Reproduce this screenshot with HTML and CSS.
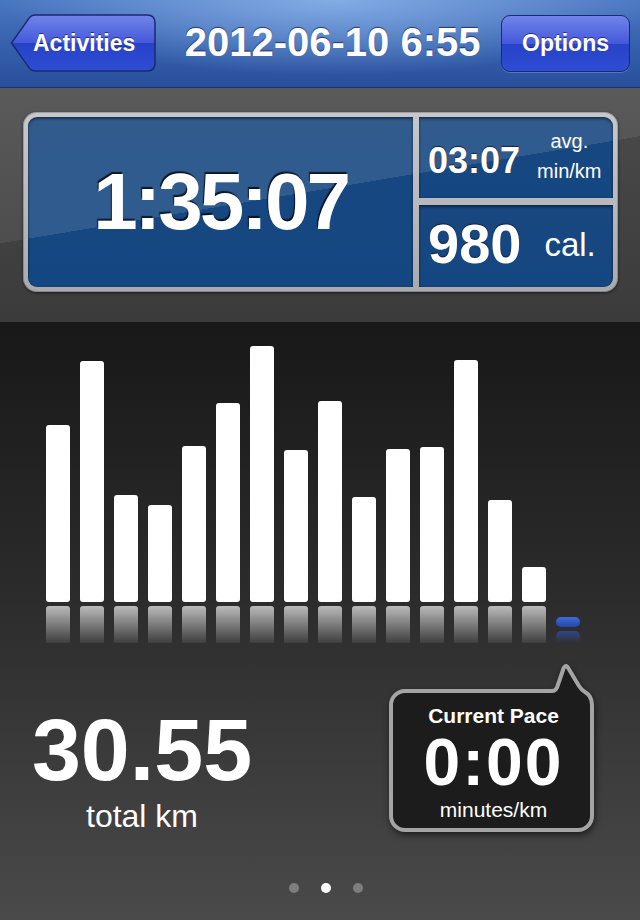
FILE: index.html
```html
<!DOCTYPE html>
<html>
<head>
<meta charset="utf-8">
<title>Activity</title>
<link rel="stylesheet" href="styles.css">
</head>
<body>
<div class="screen">
  <header class="navbar">
    <button class="nav-btn back-btn">
      <svg class="back-shape" viewBox="0 0 146 58" width="146" height="58">
        <defs>
          <linearGradient id="backFill" x1="0" y1="0" x2="0" y2="1">
            <stop offset="0" stop-color="#7184ea"/>
            <stop offset="0.5" stop-color="#4459da"/>
            <stop offset="0.5" stop-color="#2742c8"/>
            <stop offset="1" stop-color="#2e4dd2"/>
          </linearGradient>
        </defs>
        <path d="M1.5 29 L19.5 3.6 Q21.5 1 25.5 1 L137 1 Q145 1 145 9 L145 49 Q145 57 137 57 L25.5 57 Q21.5 57 19.5 54.4 Z" fill="url(#backFill)" stroke="#1a2a72" stroke-width="1.5"/>
      </svg>
      <span class="btn-label">Activities</span>
    </button>
    <h1 class="title">2012-06-10 6:55</h1>
    <button class="nav-btn options-btn">Options</button>
  </header>

  <section class="summary">
    <div class="panel">
      <div class="cell time-cell">1:35:07</div>
      <div class="side">
        <div class="cell pace-cell">
          <span class="pace-num">03:07</span>
          <span class="pace-unit"><span>avg.</span><span>min/km</span></span>
        </div>
        <div class="cell cal-cell">
          <span class="cal-num">980</span>
          <span class="cal-unit">cal.</span>
        </div>
      </div>
    </div>
  </section>

  <section class="activity">
    <div class="chart">
      <div class="col"><div class="bar" style="height:177px"></div><div class="refl"></div></div>
      <div class="col"><div class="bar" style="height:241px"></div><div class="refl"></div></div>
      <div class="col"><div class="bar" style="height:107px"></div><div class="refl"></div></div>
      <div class="col"><div class="bar" style="height:97px"></div><div class="refl"></div></div>
      <div class="col"><div class="bar" style="height:156px"></div><div class="refl"></div></div>
      <div class="col"><div class="bar" style="height:199px"></div><div class="refl"></div></div>
      <div class="col"><div class="bar" style="height:256px"></div><div class="refl"></div></div>
      <div class="col"><div class="bar" style="height:152px"></div><div class="refl"></div></div>
      <div class="col"><div class="bar" style="height:201px"></div><div class="refl"></div></div>
      <div class="col"><div class="bar" style="height:105px"></div><div class="refl"></div></div>
      <div class="col"><div class="bar" style="height:153px"></div><div class="refl"></div></div>
      <div class="col"><div class="bar" style="height:155px"></div><div class="refl"></div></div>
      <div class="col"><div class="bar" style="height:242px"></div><div class="refl"></div></div>
      <div class="col"><div class="bar" style="height:102px"></div><div class="refl"></div></div>
      <div class="col"><div class="bar" style="height:35px"></div><div class="refl"></div></div>
      <div class="col"><div class="bar current" style="height:10px"></div><div class="refl current"></div></div>
    </div>

    <div class="stats-row">
      <div class="distance">
        <div class="dist-num">30.55</div>
        <div class="dist-unit">total km</div>
      </div>
      <div class="pace-bubble">
        <svg class="bubble-shape" viewBox="0 0 205 171" width="205" height="171">
          <path d="M16 30 H163 Q166.5 30 168 26.5 L174.5 7.5 Q177 2.5 179.5 7.5 L190 25 Q192.5 29 196 31 Q203 35 203 44 V155 A14 14 0 0 1 189 169 H16 A14 14 0 0 1 2 155 V44 A14 14 0 0 1 16 30 Z" fill="#1c1c1c" stroke="#a4a4a4" stroke-width="4" stroke-linejoin="round"/>
        </svg>
        <div class="bubble-content">
          <div class="bubble-label">Current Pace</div>
          <div class="bubble-value">0:00</div>
          <div class="bubble-unit">minutes/km</div>
        </div>
      </div>
    </div>

    <div class="dots">
      <span class="dot"></span>
      <span class="dot active"></span>
      <span class="dot"></span>
    </div>
  </section>
</div>
</body>
</html>
```

FILE: styles.css
```css
* {
  box-sizing: border-box;
}

html,
body {
  margin: 0;
  padding: 0;
}

body {
  width: 640px;
  height: 920px;
  overflow: hidden;
  background: #000;
  color: #fff;
  font-family: "Liberation Sans", Arial, Helvetica, sans-serif;
}

.screen {
  width: 640px;
  height: 920px;
  display: flex;
  flex-direction: column;
}

/* ---------- navigation bar ---------- */
.navbar {
  flex: none;
  height: 88px;
  display: flex;
  align-items: flex-start;
  justify-content: space-between;
  padding: 14px 10px 0 10px;
  border-bottom: 1px solid #1c336e;
  background:
    radial-gradient(ellipse 330px 75px at 52% 0, rgba(150, 190, 240, 0.75), rgba(150, 190, 240, 0)),
    linear-gradient(#4a77c2, #3561ad 50%, #2a4f9c);
}

.nav-btn {
  border: none;
  margin: 0;
  background: none;
  font-family: inherit;
  color: #fff;
  font-size: 23px;
  font-weight: bold;
  text-shadow: 0 -1px 0 rgba(0, 0, 30, 0.55);
  cursor: pointer;
}

.back-btn {
  position: relative;
  height: 58px;
  width: 146px;
  padding: 0 19px 0 23px;
  display: flex;
  align-items: center;
}

.back-shape {
  position: absolute;
  left: 0;
  top: 0;
  display: block;
}

.btn-label {
  position: relative;
  line-height: 58px;
}

.options-btn {
  height: 57px;
  margin-top: 1px;
  padding: 0 20px;
  line-height: 55px;
  border: 1px solid #1a2a72;
  border-radius: 9px;
  background: linear-gradient(#7184ea, #4459da 50%, #2742c8 50%, #2e4dd2);
  box-shadow: 0 1px 0 rgba(255, 255, 255, 0.2);
}

.title {
  margin: 0 0 0 8px;
  font-size: 40px;
  font-weight: bold;
  line-height: 56px;
  text-shadow: 0 -1px 1px rgba(0, 0, 40, 0.6);
}

/* ---------- summary panel ---------- */
.summary {
  flex: none;
  height: 234px;
  padding: 24px 0 0 23px;
  background:
    linear-gradient(170.5deg, rgba(0, 0, 0, 0) 240px, rgba(0, 0, 0, 0.17) 240px) fixed,
    linear-gradient(#5a5a5a, #474747);
}

.panel {
  width: 595px;
  height: 180px;
  padding: 5px;
  border-radius: 14px;
  background: linear-gradient(#c6c8cb, #a8aaad);
  box-shadow: 0 1px 3px rgba(0, 0, 0, 0.55), inset 0 0 0 1px rgba(0, 0, 0, 0.2);
  display: grid;
  grid-template-columns: 385px 194px;
  column-gap: 6px;
}

.side {
  display: grid;
  grid-template-rows: 81px 82px;
  row-gap: 7px;
}

.cell {
  background:
    linear-gradient(170.5deg, rgba(255, 255, 255, 0.11) 240px, rgba(255, 255, 255, 0) 240px) fixed,
    linear-gradient(#19477f, #144782);
  box-shadow: inset 0 2px 3px rgba(0, 0, 0, 0.45), inset 0 0 1px rgba(0, 0, 0, 0.6);
}

.time-cell {
  border-radius: 9px 0 0 9px;
  display: flex;
  align-items: center;
  justify-content: center;
  font-size: 80px;
  font-weight: bold;
  line-height: 80px;
  letter-spacing: -3px;
  text-shadow: -1px -2px 1px rgba(0, 0, 0, 0.75);
}

.pace-cell {
  border-radius: 0 9px 0 0;
  display: flex;
  align-items: center;
  padding-left: 9px;
}

.pace-num {
  font-size: 36px;
  font-weight: bold;
  line-height: 36px;
  margin-top: 6px;
  text-shadow: 0 -1px 1px rgba(0, 0, 0, 0.6);
}

.pace-unit {
  display: flex;
  flex-direction: column;
  align-items: center;
  margin-left: 17px;
  margin-bottom: 4px;
  font-size: 20px;
  line-height: 30px;
}

.cal-cell {
  border-radius: 0 0 9px 0;
  display: flex;
  align-items: center;
  padding-left: 9px;
}

.cal-num {
  font-size: 56px;
  font-weight: bold;
  line-height: 56px;
  margin-bottom: 4px;
  text-shadow: 0 -1px 1px rgba(0, 0, 0, 0.6);
}

.cal-unit {
  font-size: 33px;
  line-height: 33px;
  margin-left: 23px;
  margin-bottom: 4px;
}

/* ---------- activity area ---------- */
.activity {
  flex: 1;
  background: linear-gradient(#181818, #2b2b2b 45%, #4a4a4a);
}

.chart {
  height: 328px;
  padding: 0 0 7px 46px;
  display: flex;
  align-items: flex-end;
  gap: 10px;
}

.col {
  width: 24px;
  display: flex;
  flex-direction: column;
}

.bar {
  background: #fff;
  border-radius: 3px;
}

.bar.current {
  border-radius: 5px;
  background: linear-gradient(#3f6bd8, #2346ac);
}

.refl {
  height: 37px;
  margin-top: 4px;
  border-radius: 3px 3px 0 0;
  background: linear-gradient(rgba(255, 255, 255, 0.68), rgba(255, 255, 255, 0.07));
}

.refl.current {
  height: 12px;
  border-radius: 5px 5px 0 0;
  background: linear-gradient(rgba(50, 85, 190, 0.6), rgba(50, 85, 190, 0));
}

.stats-row {
  height: 182px;
  display: flex;
  justify-content: space-between;
  align-items: flex-start;
  padding: 0 46px 0 22px;
}

.distance {
  width: 240px;
  margin-top: 56px;
  text-align: center;
}

.dist-num {
  font-size: 88px;
  font-weight: bold;
  line-height: 88px;
}

.dist-unit {
  font-size: 32px;
  line-height: 34px;
  margin-top: 5px;
}

.pace-bubble {
  position: relative;
  width: 205px;
  height: 143px;
  margin-top: 39px;
  padding: 15px 0 0 4px;
  text-align: center;
}

.bubble-shape {
  position: absolute;
  left: 0;
  top: -28px;
  display: block;
  filter: drop-shadow(1px 3px 3px rgba(0, 0, 0, 0.55));
}

.bubble-content {
  position: relative;
}

.bubble-label {
  font-size: 21px;
  font-weight: bold;
  line-height: 24px;
}

.bubble-value {
  font-size: 66px;
  font-weight: bold;
  line-height: 64px;
  margin-top: 2px;
  letter-spacing: 2px;
}

.bubble-unit {
  font-size: 21px;
  line-height: 24px;
  margin-top: 4px;
}

.dots {
  display: flex;
  justify-content: center;
  gap: 22px;
  padding-left: 12px;
  margin-top: 51px;
}

.dot {
  width: 10px;
  height: 10px;
  border-radius: 50%;
  background: #7e7e7e;
}

.dot.active {
  background: #fff;
}
```
